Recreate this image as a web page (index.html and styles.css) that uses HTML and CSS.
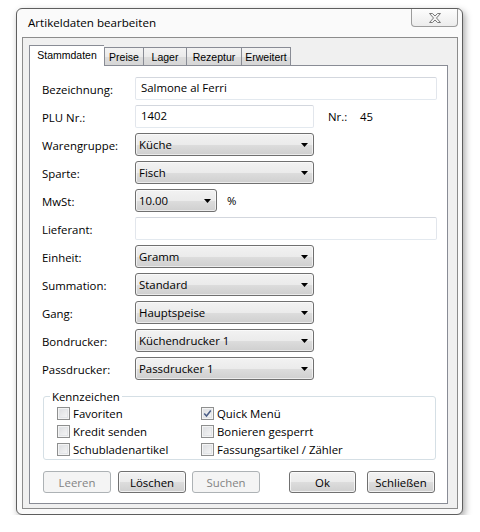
FILE: index.html
```html
<!DOCTYPE html>
<html>
<head>
<meta charset="utf-8">
<title>Artikeldaten bearbeiten</title>
<link rel="stylesheet" href="styles.css">
</head>
<body>
<div class="window">
  <div class="titlebar">
    <span class="title">Artikeldaten bearbeiten</span>
    <div class="close">
      <svg width="12" height="10" viewBox="0 0 12 10"><polygon points="0.5,0.5 3.5,0.5 6,3 8.5,0.5 11.5,0.5 7.5,5 11.5,9.5 8.5,9.5 6,7 3.5,9.5 0.5,9.5 4.5,5" fill="#f2f2f2" stroke="#7a7a7a" stroke-width="1"/></svg>
    </div>
  </div>
  <div class="client">
    <div class="tabs">
      <div class="tab active t1">Stammdaten</div>
      <div class="tab t2">Preise</div>
      <div class="tab t3">Lager</div>
      <div class="tab t4">Rezeptur</div>
      <div class="tab t5">Erweitert</div>
    </div>
    <div class="page">
      <div class="form">
        <div class="row"><span class="label">Bezeichnung:</span><div class="input wide">Salmone al Ferri</div></div>
        <div class="row"><span class="label">PLU Nr.:</span>
          <div class="line"><div class="input mid">1402</div><span class="nr">Nr.:</span><span>45</span></div></div>
        <div class="row"><span class="label">Warengruppe:</span><div class="combo mid"><span>Küche</span><svg class="arrow" width="7" height="4" viewBox="0 0 7 4"><polygon points="0,0 7,0 3.5,4" fill="#000"/></svg></div></div>
        <div class="row"><span class="label">Sparte:</span><div class="combo mid"><span>Fisch</span><svg class="arrow" width="7" height="4" viewBox="0 0 7 4"><polygon points="0,0 7,0 3.5,4" fill="#000"/></svg></div></div>
        <div class="row"><span class="label">MwSt:</span>
          <div class="line"><div class="combo small"><span>10.00</span><svg class="arrow" width="7" height="4" viewBox="0 0 7 4"><polygon points="0,0 7,0 3.5,4" fill="#000"/></svg></div><span class="pct">%</span></div></div>
        <div class="row"><span class="label">Lieferant:</span><div class="input wide"></div></div>
        <div class="row"><span class="label">Einheit:</span><div class="combo mid"><span>Gramm</span><svg class="arrow" width="7" height="4" viewBox="0 0 7 4"><polygon points="0,0 7,0 3.5,4" fill="#000"/></svg></div></div>
        <div class="row"><span class="label">Summation:</span><div class="combo mid"><span>Standard</span><svg class="arrow" width="7" height="4" viewBox="0 0 7 4"><polygon points="0,0 7,0 3.5,4" fill="#000"/></svg></div></div>
        <div class="row"><span class="label">Gang:</span><div class="combo mid"><span>Hauptspeise</span><svg class="arrow" width="7" height="4" viewBox="0 0 7 4"><polygon points="0,0 7,0 3.5,4" fill="#000"/></svg></div></div>
        <div class="row"><span class="label">Bondrucker:</span><div class="combo mid"><span>Küchendrucker 1</span><svg class="arrow" width="7" height="4" viewBox="0 0 7 4"><polygon points="0,0 7,0 3.5,4" fill="#000"/></svg></div></div>
        <div class="row"><span class="label">Passdrucker:</span><div class="combo mid"><span>Passdrucker 1</span><svg class="arrow" width="7" height="4" viewBox="0 0 7 4"><polygon points="0,0 7,0 3.5,4" fill="#000"/></svg></div></div>
      </div>
      <fieldset class="group">
        <legend>Kennzeichen</legend>
        <div class="checks">
          <div class="check"><span class="cb"></span>Favoriten</div>
          <div class="check"><span class="cb"><svg width="11" height="11" viewBox="0 0 11 11"><polyline points="2.2,5.5 4.5,8 8.8,2.5" fill="none" stroke="#4a5d86" stroke-width="1.5"/></svg></span>Quick Menü</div>
          <div class="check"><span class="cb"></span>Kredit senden</div>
          <div class="check"><span class="cb"></span>Bonieren gesperrt</div>
          <div class="check"><span class="cb"></span>Schubladenartikel</div>
          <div class="check"><span class="cb"></span>Fassungsartikel / Zähler</div>
        </div>
      </fieldset>
      <div class="buttons">
        <div class="btn disabled b-leeren">Leeren</div>
        <div class="btn b-loeschen">Löschen</div>
        <div class="btn disabled b-suchen">Suchen</div>
        <div class="btn b-ok">Ok</div>
        <div class="btn b-close">Schließen</div>
      </div>
    </div>
  </div>
</div>
</body>
</html>
```
FILE: styles.css
```css
html, body {
  margin: 0;
  padding: 0;
  background: #ffffff;
}
body {
  font-family: "Open Sans", "Noto Sans", sans-serif;
  font-size: 11.4px;
  color: #000;
}
.window {
  margin: 8px 0 0 16px;
  width: 447px;
  height: 507px;
  box-sizing: border-box;
  border: 1px solid #5e5e5e;
  border-radius: 6px;
  background: #fafafa;
  box-shadow: 2px 3px 7px rgba(0, 0, 0, 0.35);
  padding: 0 4px 5px 5px;
  display: flex;
  flex-direction: column;
}
.titlebar {
  height: 28px;
  display: flex;
  justify-content: space-between;
  align-items: flex-start;
}
.title {
  font-size: 11.6px;
  line-height: 28px;
  padding-left: 6px;
}
.close {
  width: 47px;
  height: 18px;
  box-sizing: border-box;
  border: 1px solid #9c9c9c;
  border-top: none;
  border-radius: 0 0 4px 4px;
  background: linear-gradient(#fdfdfd, #ececec);
  display: flex;
  align-items: center;
  justify-content: center;
}
.close svg { display: block; }
.client {
  flex: 1;
  border: 1px solid #8c8c8c;
  background: #f0f0f0;
  padding: 7px 9px 4px 6px;
  display: flex;
  flex-direction: column;
}
.tabs {
  position: relative;
  z-index: 1;
  display: flex;
  align-items: flex-end;
  height: 21px;
  margin-bottom: -1px;
  font-family: "Liberation Sans", Arial, sans-serif;
  font-size: 10.5px;
}
.tab {
  box-sizing: border-box;
  height: 19px;
  border: 1px solid #898c95;
  border-right: none;
  background: linear-gradient(#f3f3f3, #ebebeb 50%, #dddddd 51%, #d6d6d6);
  text-align: center;
  line-height: 19px;
}
.tab.t5 { border-right: 1px solid #898c95; }
.tab.active {
  height: 21px;
  background: #fff;
  border-bottom: none;
  line-height: 19px;
}
.t1 { width: 75px; }
.t2 { width: 39px; }
.t3 { width: 43px; }
.t4 { width: 55px; }
.t5 { width: 50px; }
.page {
  flex: 1;
  border: 1px solid #898c95;
  background: #fff;
  padding: 11px 10px 0 12px;
  display: flex;
  flex-direction: column;
}
.form {
  display: flex;
  flex-direction: column;
  gap: 5px;
}
.row {
  display: grid;
  grid-template-columns: 93px auto;
  align-items: center;
  height: 23px;
}
.label {
  padding-top: 2px;
}
.line {
  display: flex;
  align-items: center;
}
.input {
  box-sizing: border-box;
  height: 23px;
  border: 1px solid;
  border-color: #d3d7de #e2e6ec #e3e9ef #e2e6ec;
  border-radius: 2px;
  background: #fff;
  padding: 0 5px 2px;
  display: flex;
  align-items: center;
}
.wide { width: 302px; }
.mid { width: 179px; }
.small { width: 82px; }
.nr {
  margin-left: 14px;
  width: 32px;
}
.pct { margin-left: 10px; }
.combo {
  box-sizing: border-box;
  height: 23px;
  border: 1px solid #707070;
  border-radius: 3px;
  background: linear-gradient(#f2f2f2, #ebebeb 50%, #dddddd 51%, #cfcfcf);
  box-shadow: inset 0 0 0 1px rgba(255, 255, 255, 0.6);
  padding: 0 5px 0 3px;
  display: flex;
  align-items: center;
  justify-content: space-between;
}
.arrow { display: block; }
.group {
  margin: 9px 0 0 1px;
  width: 393px;
  box-sizing: border-box;
  border: 1px solid #d5dfe5;
  border-radius: 3px;
  padding: 0 0 1px 0;
  min-width: 0;
}
.group legend {
  margin-left: 6px;
  padding: 0 2px;
  line-height: 15px;
}
.checks {
  display: grid;
  grid-template-columns: 144px auto;
  grid-auto-rows: 18px;
  padding-left: 13px;
}
.check {
  display: flex;
  align-items: center;
  gap: 3px;
}
.cb {
  width: 13px;
  height: 13px;
  box-sizing: border-box;
  border: 1px solid #8e8f8f;
  background: linear-gradient(135deg, #d9dbde, #f9f9f9);
  box-shadow: inset 0 0 0 1px #f4f4f4, inset 0 0 0 2px #e2e4e7;
  display: flex;
  align-items: center;
  justify-content: center;
}
.cb svg { display: block; }
.buttons {
  display: flex;
  margin: 11px 0 0 1px;
}
.btn {
  box-sizing: border-box;
  height: 22px;
  width: 68px;
  border: 1px solid #707070;
  border-radius: 3px;
  background: linear-gradient(#f2f2f2, #ebebeb 50%, #dddddd 51%, #cfcfcf);
  box-shadow: inset 0 0 0 1px rgba(255, 255, 255, 0.7);
  display: flex;
  align-items: center;
  justify-content: center;
}
.btn.disabled {
  border-color: #adb2b5;
  background: #f4f4f4;
  box-shadow: none;
  color: #838383;
}
.b-loeschen { margin-left: 7px; }
.b-suchen { margin-left: 6px; }
.b-ok { margin-left: 29px; width: 67px; }
.b-close { margin-left: 11px; }
```
